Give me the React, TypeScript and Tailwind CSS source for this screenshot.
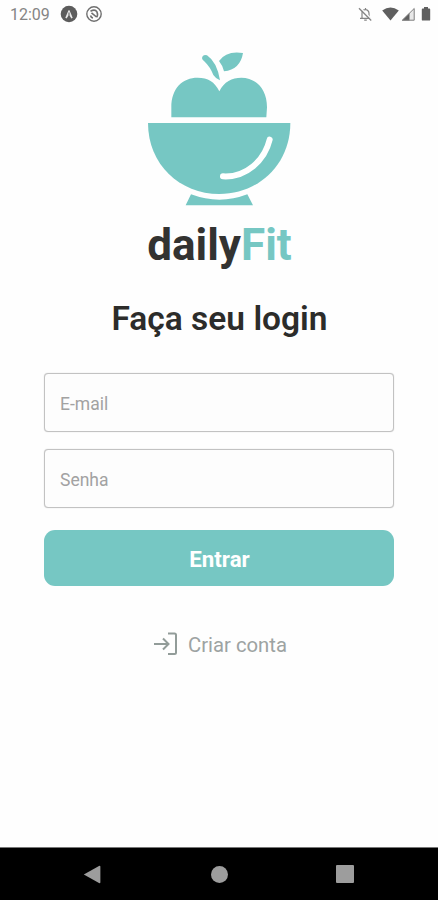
import React from 'react';

const StatusBar: React.FC = () => {
  return (
    <header className="flex h-7 items-center justify-between pl-[10px] pr-[7px] text-[#707070]">
      <div className="flex items-center">
        <span className="w-[50px] pt-[2px] text-[16px] leading-[26px] text-[#858585] whitespace-nowrap">12:09</span>

        {/* Expo notification */}
        <svg className="h-[18px] w-[18px]" viewBox="0 0 18 18" fill="none">
          <circle cx="9" cy="9" r="8.3" fill="#5c5c5c" />
          <path d="M5.300 12.800 8.400 5.500q.6-1 1.200 0l3.100 7.300-1.300.6L9 9.800l-2.400 3.600Z" fill="#e8e8e8" />
          <path d="M9 7.500v3" stroke="#5c5c5c" strokeWidth="1" />
        </svg>

        {/* Sync notification */}
        <svg className="ml-[7px] h-[18px] w-[18px]" viewBox="0 0 18 18" fill="none" stroke="#6f6f6f">
          <circle cx="9" cy="9" r="7.2" strokeWidth="1.4" />
          <path d="M5.500 6.300q4.500-2.500 6.500.7 1.300 3-.5 5.300M6.500 7.800l5 4.200M5.500 10.500q.5 2 2.500 2.500" strokeWidth="1.6" />
        </svg>
      </div>

      <div className="flex items-center">
        {/* Muted bell */}
        <svg className="h-[18px] w-[17px]" viewBox="0 0 17 18" fill="none" stroke="#858585">
          <path d="M5 13V8.2a3.5 3.5 0 0 1 7 0V13M3 13.3h11M7.2 15.2h2.6M8.5 3v2" strokeWidth="1.2" />
          <path d="m3.300 2.700 12 12.400" stroke="#fefefe" strokeWidth="1.500" />
          <path d="m2 3.2 12.2 12.3" strokeWidth="1.3" />
        </svg>

        {/* Wi-Fi */}
        <svg className="ml-[8px] h-[18px] w-[17px]" viewBox="0 0 17 18" fill="#5f5f5f">
          <path d="M.2 5.4Q8.5-.2 16.8 5.4L8.5 15.6Z" />
        </svg>

        {/* Mobile signal */}
        <svg className="ml-[2px] h-[18px] w-[14px]" viewBox="0 0 14 18">
          <path d="M13.5 3v12.5H.8Z" fill="#e8e8e8" />
          <path d="M8.5 8v7.5H.8Z" fill="#5f5f5f" />
          <path d="M13.2 3.5v11.7H1.4Z" fill="none" stroke="#808080" strokeWidth="1" />
        </svg>

        {/* Battery */}
        <svg className="ml-[6px] h-[18px] w-[10px]" viewBox="0 0 10 18" fill="#5f5f5f">
          <path d="M3 2h4v1.6h1.3q.9 0 .9.9v10.2q0 .9-.9.9H1.7q-.9 0-.9-.9V4.500q0-.9.9-.9H3Z" />
        </svg>
      </div>
    </header>
  );
};

const Logo: React.FC = () => {
  return (
    <div className="flex flex-col items-center pl-[2px]">
      <svg className="mt-3 h-[175px] w-[170px]" viewBox="0 0 510 525" fill="#76c7c3">
        {/* Stem and leaf */}
        <path d="M202 50q4-8 14-4 30 20 39 75-12-4-20-16-9-24-28-42-8-6-5-13Z" />
        <path d="M252 63q22-32 72-24-8 50-57 55-3-16-15-31Z" />
        {/* Apple */}
        <path d="M109 232v-30c0-58 34-89 79-89 31 0 51 12 65 41 14-29 38-41 66-41 44 0 77 34 77 89l-2 30Z" />
        {/* Bowl */}
        <path d="M39 249H466C466 373 371 462 253 462 134 462 39 373 39 249Z" />
        <path d="M404 299C389 361 334 413 264 409" fill="none" stroke="#fff" strokeWidth="18" strokeLinecap="round" />
        <path d="M168 463q86 32 169 0l17 33H152Z" />
      </svg>
      <h1 className="mt-[3px] h-[54px] pr-[1px] text-[44px] font-bold leading-[54px] text-[#333331]">
        daily<span className="text-[#76c7c3]">Fit</span>
      </h1>
    </div>
  );
};

interface FieldProps {
  type: string;
  placeholder: string;
}

const Field: React.FC<FieldProps> = ({ type, placeholder }) => {
  return (
    <input
      type={type}
      placeholder={placeholder}
      aria-label={placeholder}
      className="h-[59px] w-full rounded-[4px] border border-[#c2c2c2] bg-[#fdfdfd] px-[15px] pt-[3px]
                 text-[17.500px] text-[#333331] placeholder:text-[#a2a2a2] outline-none
                 shadow-[0_0_1px_#c2c2c2]"
    />
  );
};

const NavigationBar: React.FC = () => {
  return (
    <nav className="flex h-[53px] items-center justify-between border-t border-[#777] bg-black pl-[83px] pr-[84px]">
      <svg className="h-[19px] w-[18px]" viewBox="0 0 18 19" fill="#9d9d9d">
        <path d="M.8 9.500 16 .9q1.400-.5 1.400.8v15.600q0 1.300-1.400.8Z" />
      </svg>
      <div className="ml-[1px] h-[17px] w-[17px] rounded-full bg-[#9d9d9d]" />
      <div className="h-[18px] w-[18px] rounded-[1px] bg-[#9d9d9d]" />
    </nav>
  );
};

const App: React.FC = () => {
  return (
    <div className="flex h-screen w-full flex-col overflow-hidden bg-[#fefefe] font-['Roboto',sans-serif]">
      <StatusBar />

      <main className="flex flex-1 flex-col items-center">
        <Logo />

        <h2 className="mt-[27px] h-[40px] pl-[1px] text-[33.500px] font-semibold leading-[40px] text-[#2c2c2a]">
          Faça seu login
        </h2>

        <form className="mt-[34px] w-[350px]" onSubmit={(e) => e.preventDefault()}>
          <div className="flex flex-col gap-[17px]">
            <Field type="email" placeholder="E-mail" />
            <Field type="password" placeholder="Senha" />
          </div>
          <button
            type="submit"
            className="mt-[22px] flex h-[56px] w-full items-center justify-center rounded-[11px] bg-[#76c7c3]
                       pl-[1px] pt-[3px] text-[22.300px] font-bold text-white"
          >
            Entrar
          </button>
        </form>

        <a href="#" className="mt-[43px] flex h-8 items-center gap-[10px] pl-[2px] text-[20.300px] text-[#9da3a2]">
          <svg className="mb-[2px] h-6 w-[25px]" viewBox="0 0 25 24" fill="none" stroke="#929c99" strokeWidth="2">
            <path d="M15 1.500h6.500q1.500 0 1.500 1.500v17.500q0 1.500-1.500 1.500H15" />
            <path d="M1 12h14.500M10 6.500l5.500 5.500-5.500 5.500" />
          </svg>
          Criar conta
        </a>
      </main>

      <NavigationBar />
    </div>
  );
};

export default App;
